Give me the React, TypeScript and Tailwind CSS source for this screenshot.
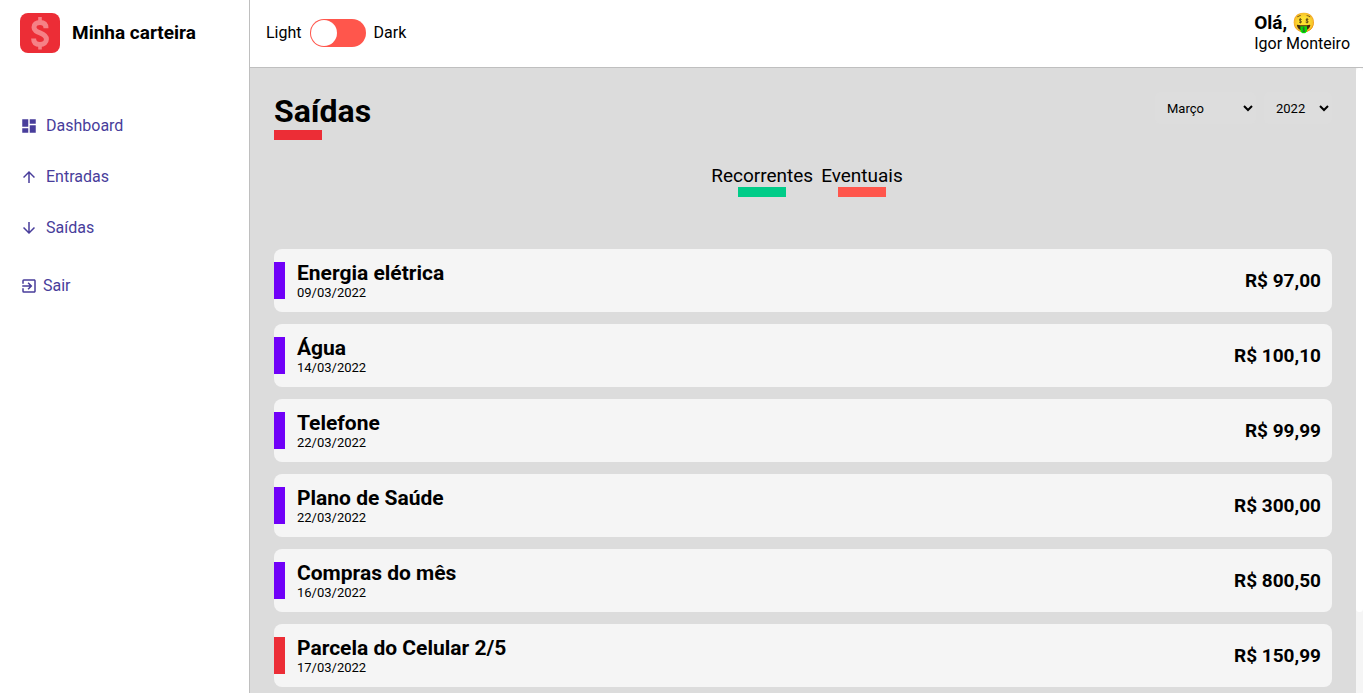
import { useState } from "react";
import {
  MdArrowDownward,
  MdArrowUpward,
  MdDashboard,
  MdExitToApp,
} from "react-icons/md";

const months = [
  "Janeiro", "Fevereiro", "Março", "Abril", "Maio", "Junho",
  "Julho", "Agosto", "Setembro", "Outubro", "Novembro", "Dezembro",
];

const links = [
  { label: "Dashboard", icon: MdDashboard },
  { label: "Entradas", icon: MdArrowUpward },
  { label: "Saídas", icon: MdArrowDownward },
];

const expenses = [
  { title: "Energia elétrica", date: "09/03/2022", amount: "R$ 97,00", tag: "bg-[#7000f8]" },
  { title: "Água", date: "14/03/2022", amount: "R$ 100,10", tag: "bg-[#7000f8]" },
  { title: "Telefone", date: "22/03/2022", amount: "R$ 99,99", tag: "bg-[#7000f8]" },
  { title: "Plano de Saúde", date: "22/03/2022", amount: "R$ 300,00", tag: "bg-[#7000f8]" },
  { title: "Compras do mês", date: "16/03/2022", amount: "R$ 800,50", tag: "bg-[#7000f8]" },
  { title: "Parcela do Celular 2/5", date: "17/03/2022", amount: "R$ 150,99", tag: "bg-[#ec2d36]" },
];

function Logo() {
  return (
    <svg viewBox="0 0 40 40" className="size-10" aria-hidden="true">
      <rect width="40" height="40" rx="8" fill="#ec2d36" />
      <g fill="none" stroke="#f58186">
        <path strokeWidth="3.6" d="M20 4v6M20 31v5.5" />
        <path
          strokeWidth="5"
          d="M26 15.2C26 11.2 23.7 9.4 20 9.4C16.3 9.4 14 11.2 14 14.2C14 17.6 16.5 18.6 20 19.9C24 21.4 26.4 22.9 26.4 26.3C26.4 29.5 23.9 31.4 20 31.4C15.9 31.4 13.6 29.3 13.6 25.4"
        />
      </g>
    </svg>
  );
}

function Sidebar() {
  return (
    <aside className="w-[250px] shrink-0 border-r border-[#bfbfbf] px-5">
      <div className="flex h-[66px] items-center gap-3">
        <Logo />
        <h3 className="text-[19px] font-bold">Minha carteira</h3>
      </div>
      <nav className="mt-12 flex flex-col items-start text-[#483d9b]">
        {links.map(({ label, icon: Icon }) => (
          <a key={label} href="#" className="mb-[27px] flex items-center gap-2 leading-6">
            <Icon size={18} />
            {label}
          </a>
        ))}
        <button type="button" className="mt-[7px] flex items-center gap-[5px] leading-6">
          <MdExitToApp size={18} />
          Sair
        </button>
      </nav>
    </aside>
  );
}

function Header() {
  const [dark, setDark] = useState(false);
  return (
    <header className="flex h-[68px] shrink-0 items-center justify-between border-b border-[#bfbfbf] pr-[13px] pb-0.5 pl-4">
      <label className="flex items-center gap-2">
        Light
        <input
          type="checkbox"
          role="switch"
          aria-label="Dark"
          checked={dark}
          onChange={() => setDark(!dark)}
          className="h-7 w-14 appearance-none rounded-full bg-[#ff564c] p-px before:block before:size-[26px] before:rounded-full before:bg-white checked:before:ml-auto"
        />
        Dark
      </label>
      <div>
        <h3 className="text-[19px] leading-[22px] font-bold">Olá, 🤑</h3>
        <p className="leading-5">Igor Monteiro</p>
      </div>
    </header>
  );
}

export default function App() {
  const [month, setMonth] = useState("Março");
  const [year, setYear] = useState("2022");
  return (
    <div className="flex h-screen bg-white font-['Roboto',sans-serif] text-base text-black">
      <Sidebar />
      <div className="flex min-w-0 flex-1 flex-col">
        <Header />
        <div className="flex min-h-0 flex-1">
          <main className="min-w-0 flex-1 overflow-y-auto bg-[#dcdcdc] px-6 pt-6 pb-[102px] [scrollbar-width:none]">
            <div className="flex justify-between">
              <h1 className="text-[32px] leading-[38px] font-bold after:block after:h-[10px] after:w-12 after:bg-[#ec2d36]">
                Saídas
              </h1>
              <div className="flex items-start gap-2 text-[13px]">
                <select
                  aria-label="Mês"
                  value={month}
                  onChange={(e) => setMonth(e.target.value)}
                  className="h-8 w-[101px] rounded-[5px] bg-[#ddd] px-2"
                >
                  {months.map((name) => (
                    <option key={name}>{name}</option>
                  ))}
                </select>
                <select
                  aria-label="Ano"
                  value={year}
                  onChange={(e) => setYear(e.target.value)}
                  className="h-8 w-[68px] rounded-[5px] bg-[#ddd] px-2"
                >
                  <option>2022</option>
                  <option>2021</option>
                </select>
              </div>
            </div>

            <div className="mt-6 flex justify-center gap-2 pl-2 text-[19px] leading-[23px]">
              <button type="button" className="after:mx-auto after:block after:h-[10px] after:w-12 after:bg-[#00cc88]">
                Recorrentes
              </button>
              <button type="button" className="after:mx-auto after:block after:h-[10px] after:w-12 after:bg-[#ff564c]">
                Eventuais
              </button>
            </div>

            <ul className="mt-[52px] flex flex-col gap-3">
              {expenses.map((item) => (
                <li key={item.title} className="flex items-center justify-between rounded-lg bg-[#f5f5f5] py-3 pr-[11px]">
                  <div className="flex items-center gap-3">
                    <span className={`h-[37px] w-[11px] ${item.tag}`} />
                    <div>
                      <h2 className="text-[21px] leading-6 font-bold">{item.title}</h2>
                      <p className="text-[13px] leading-[15px]">{item.date}</p>
                    </div>
                  </div>
                  <h3 className="text-[19px] leading-[23px] font-bold">{item.amount}</h3>
                </li>
              ))}
            </ul>
          </main>
          <div className="w-[7px] shrink-0 bg-[#f5f5f5]" aria-hidden="true">
            <div className="h-[87%] rounded-full bg-white" />
          </div>
        </div>
      </div>
    </div>
  );
}
